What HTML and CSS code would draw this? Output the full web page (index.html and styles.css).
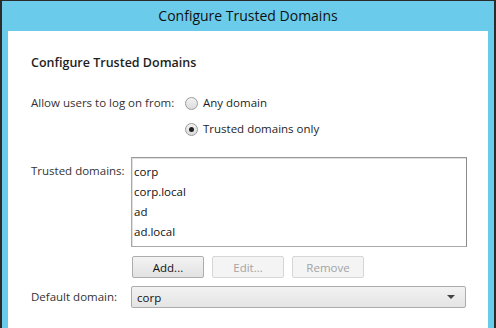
FILE: index.html
```html
<!DOCTYPE html>
<html>
<head>
<meta charset="utf-8">
<link rel="stylesheet" href="styles.css">
</head>
<body>
<div class="window">
  <div class="titlebar">Configure Trusted Domains</div>
  <div class="client">
    <h1 class="heading">Configure Trusted Domains</h1>
    <div class="form">
      <div class="label">Allow users to log on from:</div>
      <div class="radios">
        <label class="radio"><span class="circle"></span>Any domain</label>
        <label class="radio"><span class="circle checked"></span>Trusted domains only</label>
      </div>
      <div class="label list-label">Trusted domains:</div>
      <div class="field">
        <ul class="listbox">
          <li>corp</li>
          <li>corp.local</li>
          <li>ad</li>
          <li>ad.local</li>
        </ul>
        <div class="buttons">
          <button class="btn">Add...</button>
          <button class="btn disabled">Edit...</button>
          <button class="btn disabled">Remove</button>
        </div>
      </div>
      <div class="label combo-label">Default domain:</div>
      <div class="combo">
        <span>corp</span>
        <svg class="arrow" width="8" height="4" viewBox="0 0 8 4"><path d="M0 0H8L4 4Z" fill="#444"/></svg>
      </div>
    </div>
  </div>
</div>
</body>
</html>
```
FILE: styles.css
```css
html, body {
  margin: 0;
  padding: 0;
}
body {
  width: 496px;
  height: 328px;
  overflow: hidden;
  font-family: "Open Sans", "Noto Sans", sans-serif;
  font-size: 11.5px;
  color: #1e1e1e;
}
.window {
  box-sizing: border-box;
  width: 496px;
  height: 328px;
  border: 1px solid #2b2b2b;
  border-left-width: 2px;
  border-right-width: 2px;
  border-bottom: 0;
  background: #6bcbea;
  padding: 0 6px;
  display: flex;
  flex-direction: column;
}
.titlebar {
  height: 30px;
  line-height: 29px;
  text-align: center;
  font-size: 14px;
  color: #111;
}
.client {
  flex: 1;
  background: #fff;
  padding: 23px 23px 0;
}
.heading {
  margin: 0 0 23px;
  font-size: 12.5px;
  font-weight: 600;
  line-height: 18px;
}
.form {
  display: grid;
  grid-template-columns: 100px 336px;
  align-items: start;
}
.label {
  color: #333;
  line-height: 16px;
  white-space: nowrap;
}
.radios {
  display: flex;
  flex-direction: column;
  gap: 10px;
  margin-left: 54px;
}
.radio {
  display: flex;
  align-items: center;
  gap: 5px;
  line-height: 16px;
}
.circle {
  box-sizing: border-box;
  width: 13px;
  height: 13px;
  border-radius: 50%;
  border: 1px solid #9a9a9a;
  background: linear-gradient(#f2f2f2, #dcdcdc);
  display: flex;
  align-items: center;
  justify-content: center;
}
.circle.checked::after {
  content: "";
  width: 5px;
  height: 5px;
  border-radius: 50%;
  background: #222;
}
.list-label {
  margin-top: 26px;
}
.field {
  margin-top: 20px;
  display: flex;
  flex-direction: column;
  gap: 9px;
}
.listbox {
  box-sizing: border-box;
  width: 336px;
  height: 90px;
  margin: 0;
  padding: 4px 0 0 2px;
  list-style: none;
  border: 1px solid #a9a9a9;
  border-top-color: #999;
  border-right-color: #8a8a8a;
  box-shadow: inset 1px 1px 0 #e0e0e0;
}
.listbox li {
  line-height: 20px;
  color: #111;
}
.buttons {
  display: flex;
  gap: 8px;
  margin-left: 1px;
}
.btn {
  box-sizing: border-box;
  width: 72px;
  height: 22px;
  font: inherit;
  color: #111;
  padding: 0;
  border: 1px solid #adadad;
  border-radius: 2px;
  background: linear-gradient(#f3f3f3, #e2e2e2);
}
.btn.disabled {
  color: #a3a3a3;
  border-color: #d6d6d6;
  background: #f4f4f4;
}
.combo-label {
  margin-top: 11px;
}
.combo {
  box-sizing: border-box;
  width: 335px;
  height: 22px;
  margin-top: 8px;
  border: 1px solid #acacac;
  border-radius: 2px;
  background: linear-gradient(#f2f2f2, #e4e4e4);
  display: flex;
  align-items: center;
  justify-content: space-between;
  padding: 0 10px 0 5px;
  color: #111;
}
```
